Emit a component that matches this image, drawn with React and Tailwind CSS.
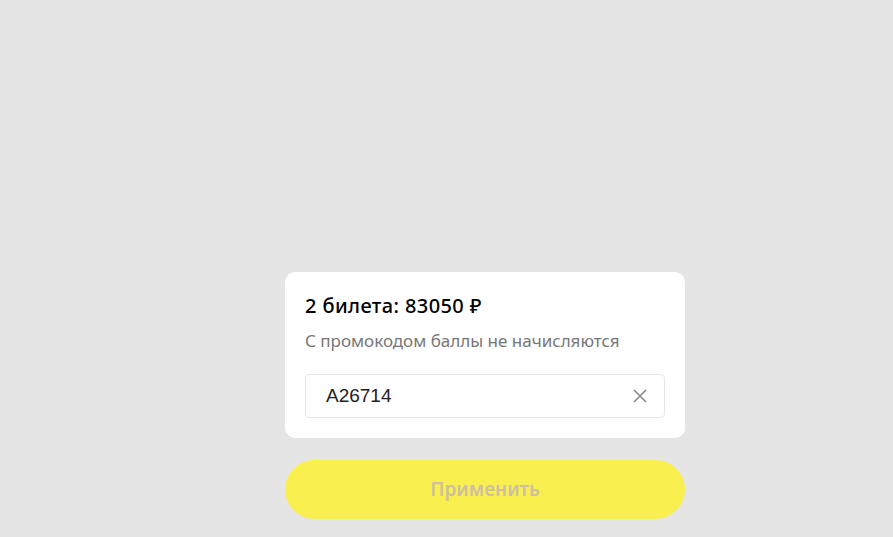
import { useState } from 'react';

export default function App() {
  const [code, setCode] = useState('A26714');

  return (
    <div className="min-h-screen w-full bg-[#e5e5e5] flex flex-col justify-end pb-[18px] pl-[285px] font-['Noto_Sans',sans-serif]">
      <div className="w-[400px] flex flex-col gap-[22px]">
        <div className="bg-white rounded-[10px] px-5 pt-5 pb-5">
          <h2 className="text-[20px] leading-[28px] font-medium tracking-[0.4px] text-black">
            2 билета: 83050 ₽
          </h2>
          <p className="mt-[9px] text-[17px] leading-[24px] text-[#777777]">
            С промокодом баллы не начисляются
          </p>
          <div className="mt-[21px] h-[44px] border border-[#e6e6e6] rounded-[4px] flex items-center pl-5 pr-4">
            <input
              value={code}
              onChange={(e) => setCode(e.target.value)}
              className="flex-1 outline-none bg-transparent text-[19px] text-[#222] font-['Liberation_Sans',Arial,sans-serif]"
            />
            <button onClick={() => setCode('')} className="text-[#8c8c8c]">
              <svg width="16" height="16" viewBox="0 0 16 16" fill="none" stroke="currentColor" strokeWidth="1.6">
                <path d="M2 2L14 14M14 2L2 14" />
              </svg>
            </button>
          </div>
        </div>
        <button className="h-[59px] w-full rounded-full bg-[#f9f04f] text-[19px] font-semibold text-[#cdbf9f]">
          Применить
        </button>
      </div>
    </div>
  );
}
